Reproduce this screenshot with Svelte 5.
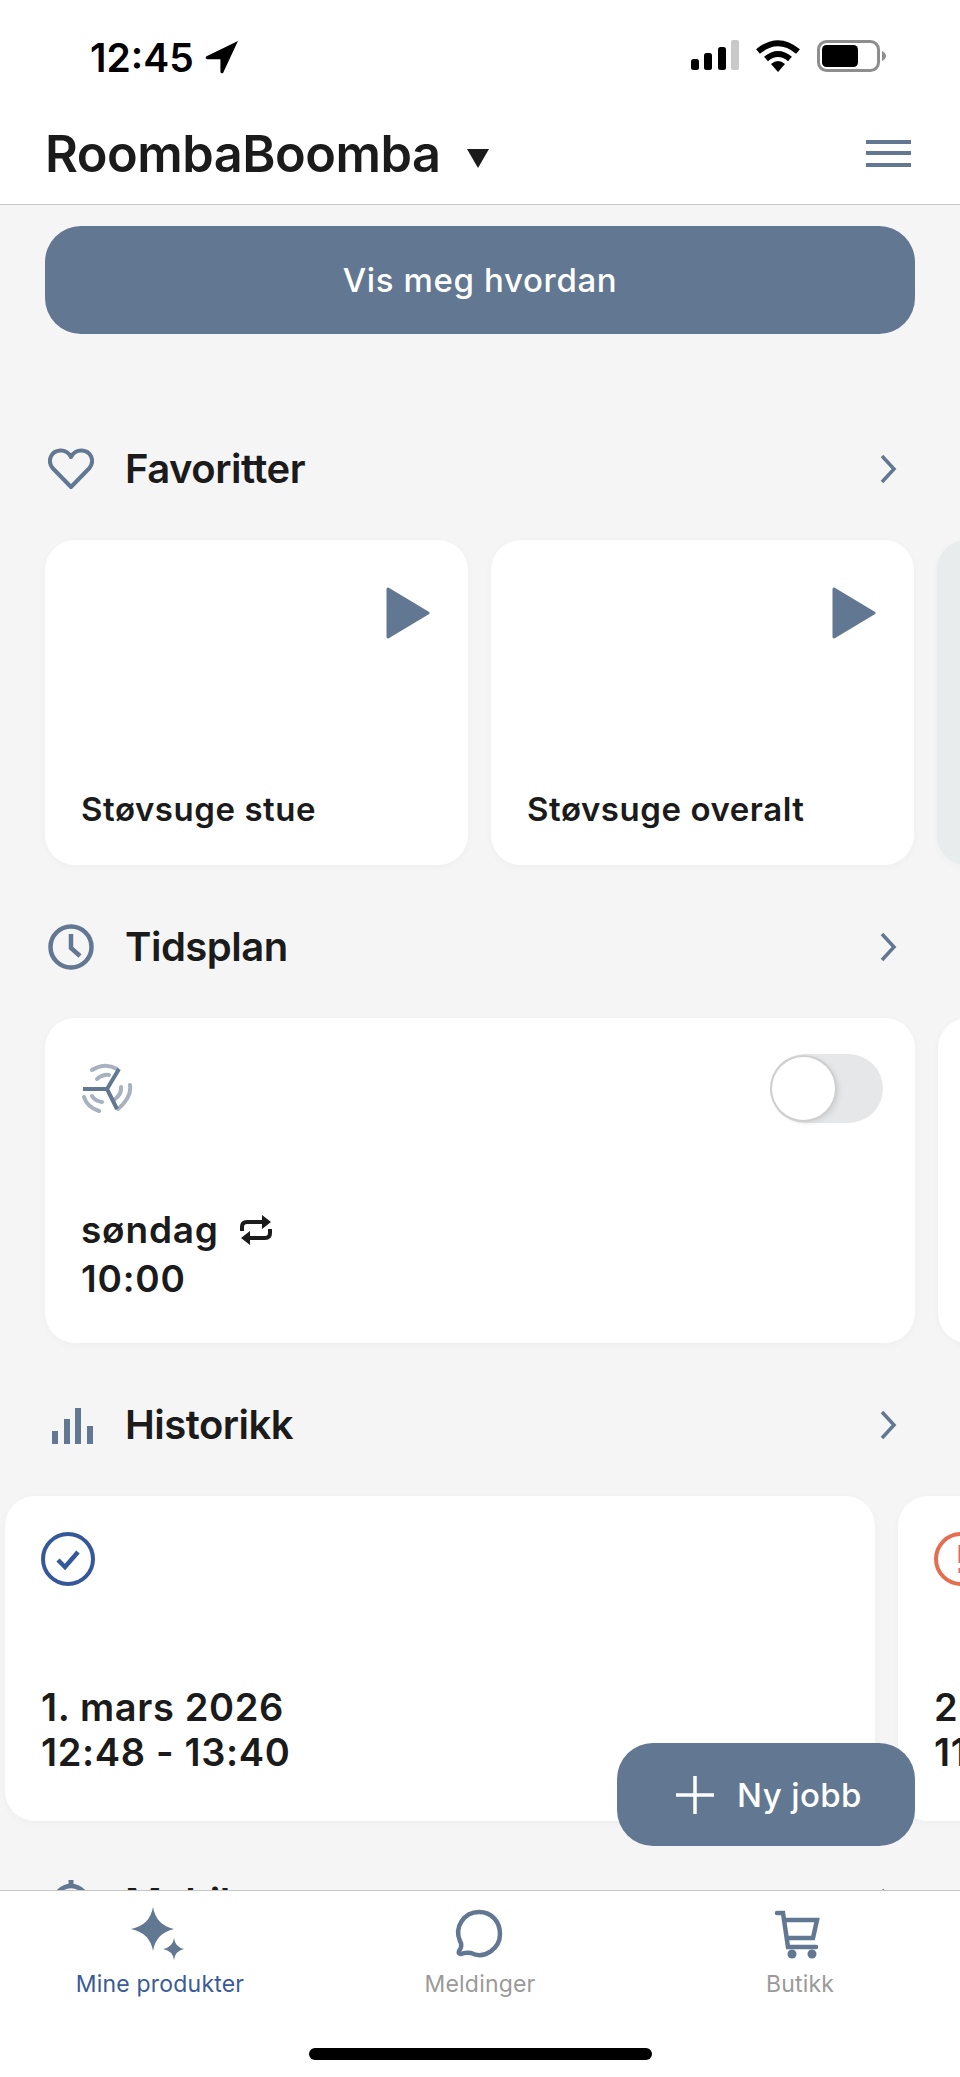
<script>
  const favorites = ["Støvsuge stue", "Støvsuge overalt"];
</script>

<div class="phone">
  <div class="statusbar">
    <div class="clock">
      <span>12:45</span>
      <svg width="34" height="34" viewBox="0 0 32 32"><path d="M31 1 L1 15.5 Q0 17.5 2 18 L14.5 18 L14.5 30 Q15 32 17 31 Z" fill="#000" /></svg>
    </div>
    <div class="status-icons">
      <svg width="48" height="30" viewBox="0 0 48 30">
        <rect x="0" y="19" width="8" height="11" rx="2.5" fill="#000" />
        <rect x="13" y="13" width="8" height="17" rx="2.5" fill="#000" />
        <rect x="27" y="7" width="8" height="23" rx="2.5" fill="#000" />
        <rect x="40" y="0" width="8" height="30" rx="2" fill="#c9c9c9" />
      </svg>
      <svg width="44" height="32" viewBox="0 0 44 32">
        <path d="M2 11.5 Q22 -5 42 11.5" fill="none" stroke="#000" stroke-width="6" stroke-linejoin="round" />
        <path d="M10 19 Q22 9 34 19" fill="none" stroke="#000" stroke-width="6" />
        <path d="M15 24 Q22 18 29 24 L22 32 Z" fill="#000" />
      </svg>
      <svg width="70" height="32" viewBox="0 0 70 32">
        <rect x="1.5" y="1.5" width="60" height="29" rx="8" fill="#fff" stroke="#8e8e8e" stroke-width="3" />
        <rect x="5" y="5" width="36" height="22" rx="4.5" fill="#000" />
        <path d="M65 11 Q69 13 69 16 Q69 19 65 21 Z" fill="#8e8e8e" />
      </svg>
    </div>
  </div>

  <header class="topbar">
    <div class="title-wrap">
      <h1>RoombaBoomba</h1>
      <span class="caret"></span>
    </div>
    <div class="burger"><i></i><i></i><i></i></div>
  </header>

  <main class="content">
    <button class="guide-btn">Vis meg hvordan</button>

    <section class="first">
      <div class="section-head">
        <svg width="46" height="42" viewBox="0 0 46 42">
          <path d="M23 39 L4.5 20 C-1 13 3 3 12 2.5 C17 2.3 21 5 23 9 C25 5 29 2.3 34 2.5 C43 3 47 13 41.5 20 Z" fill="none" stroke="#627792" stroke-width="4" stroke-linejoin="round" />
        </svg>
        <h2>Favoritter</h2>
        <svg width="20" height="30" viewBox="0 0 20 30"><path d="M3 2 L15 15 L3 28" fill="none" stroke="#627792" stroke-width="3.5" /></svg>
      </div>
      <div class="row">
        {#each favorites as name}
          <div class="card fav">
            <svg class="play" width="44" height="52" viewBox="0 0 44 52"><path d="M2 2 L42 26 L2 50 Z" fill="#627792" stroke="#627792" stroke-width="3" stroke-linejoin="round" /></svg>
            <div class="card-text">{name}</div>
          </div>
        {/each}
        <div class="card fav ghost"></div>
      </div>
    </section>

    <section>
      <div class="section-head">
        <svg width="46" height="46" viewBox="0 0 46 46">
          <circle cx="23" cy="23" r="20.5" fill="none" stroke="#627792" stroke-width="4.5" />
          <path d="M23 10 V24 L32 32" fill="none" stroke="#627792" stroke-width="4.5" />
        </svg>
        <h2>Tidsplan</h2>
        <svg width="20" height="30" viewBox="0 0 20 30"><path d="M3 2 L15 15 L3 28" fill="none" stroke="#627792" stroke-width="3.5" /></svg>
      </div>
      <div class="row">
        <div class="card wide">
          <div class="card-top">
            <svg width="52" height="50" viewBox="0 0 52 50">
              <g fill="none" stroke="#a7b1bf" stroke-width="4" stroke-linecap="round">
                <path d="M11 7 Q24 -1 36 6" />
                <path d="M16 16 Q22 11 28 12" />
                <path d="M3 34 Q6 44 18 48" />
                <path d="M11 33 Q14 38 21 39" />
                <path d="M49 22 Q51 34 37 46" />
                <path d="M40 24 Q41 31 33 37" />
              </g>
              <path d="M38 6 L26 26 L36 46 M26 26 L2 26" fill="none" stroke="#627792" stroke-width="4" />
            </svg>
            <div class="toggle"><span class="knob"></span></div>
          </div>
          <div class="card-text schedule">
            <div class="day">søndag
              <svg width="34" height="30" viewBox="0 0 34 30">
                <g fill="none" stroke="#1b1b1b" stroke-width="4">
                  <path d="M3 16 V12 Q3 7 8 7 H26" />
                  <path d="M31 14 V18 Q31 23 26 23 H8" />
                </g>
                <path d="M23 0 L32 7 L23 14 Z M11 16 L2 23 L11 30 Z" fill="#1b1b1b" />
              </svg>
            </div>
            <div>10:00</div>
          </div>
        </div>
        <div class="card wide"></div>
      </div>
    </section>

    <section>
      <div class="section-head">
        <svg class="bars" width="42" height="38" viewBox="0 0 42 38">
          <rect x="1" y="25" width="6" height="13" fill="#627792" />
          <rect x="13" y="13" width="6" height="25" fill="#627792" />
          <rect x="24" y="2" width="6" height="36" fill="#627792" />
          <rect x="36" y="20" width="6" height="18" fill="#627792" />
        </svg>
        <h2>Historikk</h2>
        <svg width="20" height="30" viewBox="0 0 20 30"><path d="M3 2 L15 15 L3 28" fill="none" stroke="#627792" stroke-width="3.5" /></svg>
      </div>
      <div class="row history">
        <div class="card wide">
          <svg class="status-dot" width="54" height="54" viewBox="0 0 54 54">
            <circle cx="27" cy="27" r="25" fill="none" stroke="#35589a" stroke-width="4" />
            <path d="M17 28 L24 35 L37 20" fill="none" stroke="#35589a" stroke-width="4.5" />
          </svg>
          <div class="card-text log">
            <div>1. mars 2026</div>
            <div>12:48 - 13:40</div>
          </div>
        </div>
        <div class="card wide">
          <svg class="status-dot" width="54" height="54" viewBox="0 0 54 54">
            <circle cx="27" cy="27" r="25" fill="none" stroke="#e56d50" stroke-width="4" />
            <path d="M27 13 V31 M27 36 V41" fill="none" stroke="#e56d50" stroke-width="5" />
          </svg>
          <div class="card-text log">
            <div>2. feb 2026</div>
            <div>11:02 - 11:40</div>
          </div>
        </div>
      </div>
    </section>

    <section>
      <div class="section-head">
        <svg width="46" height="46" viewBox="0 0 46 46">
          <circle cx="23" cy="23" r="17" fill="none" stroke="#627792" stroke-width="4.5" />
          <path d="M23 0 V8" stroke="#627792" stroke-width="5" />
        </svg>
        <h2>Mobil</h2>
        <svg width="20" height="30" viewBox="0 0 20 30"><path d="M3 2 L15 15 L3 28" fill="none" stroke="#627792" stroke-width="3.5" /></svg>
      </div>
    </section>

    <button class="fab">
      <svg width="38" height="38" viewBox="0 0 38 38"><path d="M19 0 V38 M0 19 H38" stroke="#fff" stroke-width="3.5" /></svg>
      Ny jobb
    </button>
  </main>

  <nav class="tabbar">
    <div class="tab active">
      <svg width="54" height="54" viewBox="3 0 54 54">
        <path d="M23 0 Q26 18 44 22 Q26 26 23 44 Q20 26 1 22 Q20 18 23 0 Z" fill="#627792" />
        <path d="M44 31 Q45 40 54 42 Q45 44 44 53 Q43 44 33 42 Q43 40 44 31 Z" fill="#627792" />
      </svg>
      <span>Mine produkter</span>
    </div>
    <div class="tab">
      <svg width="54" height="54" viewBox="1 0 54 54">
        <path d="M7 44 Q11 39 8 34 C2 20 12 5 27 5 C40 5 48 15 48 27 C48 41 33 53 19 46 Q13 45 9 47 Q6 47 7 44 Z" fill="none" stroke="#627792" stroke-width="4.5" stroke-linejoin="round" />
      </svg>
      <span>Meldinger</span>
    </div>
    <div class="tab">
      <svg width="54" height="54" viewBox="3 0 54 54">
        <path d="M7 6 H13 L18 40 H46" fill="none" stroke="#627792" stroke-width="4.5" stroke-linecap="round" />
        <path d="M15 13 H47 L43 31 H18" fill="none" stroke="#627792" stroke-width="4.5" />
        <circle cx="22" cy="47" r="4.5" fill="#627792" />
        <circle cx="42" cy="47" r="4.5" fill="#627792" />
      </svg>
      <span>Butikk</span>
    </div>
    <div class="home-bar"></div>
  </nav>
</div>

<style>
  :global(body) {
    margin: 0;
    background: #f5f5f5;
  }

  .phone {
    position: relative;
    width: 960px;
    height: 2077px;
    display: flex;
    flex-direction: column;
    overflow: hidden;
    font-family: Inter, "Liberation Sans", sans-serif;
    color: #1b1b1b;
    background: #f5f5f5;
  }

  .statusbar {
    height: 116px;
    flex: none;
    box-sizing: border-box;
    padding: 40px 73px 0 90px;
    display: flex;
    justify-content: space-between;
    align-items: flex-start;
    background: #fff;
  }

  .clock {
    display: flex;
    align-items: center;
    gap: 11px;
    height: 34px;
    font-size: 39px;
    font-weight: 600;
    color: #000;
  }

  .status-icons {
    display: flex;
    align-items: flex-start;
    gap: 17px;
  }

  .status-icons svg {
    display: block;
  }

  .topbar {
    height: 89px;
    flex: none;
    box-sizing: border-box;
    padding: 0 49px 14px 45px;
    display: flex;
    justify-content: space-between;
    align-items: center;
    background: #fff;
    border-bottom: 1px solid #c6c6c6;
  }

  .title-wrap {
    display: flex;
    align-items: center;
    gap: 26px;
  }

  h1 {
    margin: 2px 0 0;
    font-size: 50.5px;
    font-weight: 600;
    letter-spacing: -0.5px;
    line-height: 60px;
  }

  .caret {
    width: 0;
    height: 0;
    margin-top: 11px;
    border-left: 11px solid transparent;
    border-right: 11px solid transparent;
    border-top: 19px solid #1b1b1b;
  }

  .burger {
    display: flex;
    flex-direction: column;
    gap: 7.5px;
    width: 45px;
  }

  .burger i {
    display: block;
    height: 4px;
    background: #627792;
  }

  .content {
    position: relative;
    flex: 1;
    min-height: 0;
    overflow: hidden;
    padding-top: 21px;
  }

  .guide-btn {
    display: block;
    width: 870px;
    height: 108px;
    margin: 0 45px;
    border: none;
    border-radius: 36px;
    background: #627792;
    color: #fff;
    font-family: inherit;
    font-size: 33px;
    font-weight: 500;
    letter-spacing: 0.65px;
  }

  section {
    margin-top: 55px;
  }

  section.first {
    margin-top: 108px;
  }

  .section-head {
    display: grid;
    grid-template-columns: 77px 1fr auto;
    align-items: center;
    height: 52px;
    padding: 0 61px 0 48px;
    margin-bottom: 46px;
  }

  .section-head svg {
    display: block;
  }

  .bars {
    margin-left: 3px;
  }

  h2 {
    margin: 1px 0 0;
    font-size: 40px;
    font-weight: 600;
    letter-spacing: -0.5px;
    line-height: 52px;
  }

  .row {
    display: flex;
    gap: 23px;
    padding-left: 45px;
    height: 325px;
  }

  .row.history {
    padding-left: 5px;
  }

  .card {
    position: relative;
    flex: none;
    box-sizing: border-box;
    height: 325px;
    border-radius: 30px;
    background: #fff;
    box-shadow: 0 2px 8px rgba(0, 0, 0, 0.03);
  }

  .fav {
    width: 423px;
  }

  .ghost {
    background: #e8ecec;
  }

  .wide {
    width: 870px;
  }

  .play {
    position: absolute;
    top: 47px;
    right: 38px;
  }

  .card-text {
    position: absolute;
    left: 36px;
    font-size: 33px;
    font-weight: 600;
    letter-spacing: 0.55px;
  }

  .fav .card-text {
    top: 249px;
    line-height: 40px;
  }

  .card-top {
    display: flex;
    justify-content: space-between;
    padding: 36px 32px 0 36px;
  }

  .card-top svg {
    margin-top: 9px;
  }

  .toggle {
    position: relative;
    width: 113px;
    height: 69px;
    border-radius: 35px;
    background: #e6e7e9;
  }

  .knob {
    position: absolute;
    left: 2px;
    top: 3px;
    width: 63px;
    height: 63px;
    border-radius: 50%;
    background: #fff;
    box-shadow: 0 0 0 2px #cfcfcf, 3px 2px 6px rgba(0, 0, 0, 0.12);
  }

  .schedule {
    top: 187px;
    font-size: 37px;
    line-height: 49px;
    letter-spacing: 0.8px;
  }

  .day {
    display: flex;
    align-items: center;
    gap: 20px;
  }

  .status-dot {
    position: absolute;
    left: 36px;
    top: 36px;
  }

  .log {
    top: 189px;
    font-size: 38px;
    line-height: 45px;
    letter-spacing: 0.65px;
  }

  .fab {
    position: absolute;
    top: 1538px;
    right: 45px;
    width: 298px;
    height: 103px;
    padding: 0 0 0 6px;
    display: flex;
    align-items: center;
    justify-content: center;
    gap: 23px;
    border: none;
    border-radius: 36px;
    background: #627792;
    color: #fff;
    font-family: inherit;
    font-size: 33px;
    font-weight: 500;
    letter-spacing: 0.4px;
  }

  .tabbar {
    position: relative;
    height: 187px;
    flex: none;
    box-sizing: border-box;
    display: grid;
    grid-template-columns: repeat(3, 1fr);
    padding: 16px 0 0 0;
    background: #fff;
    border-top: 1px solid #c6c6c6;
  }

  .tab {
    display: flex;
    flex-direction: column;
    align-items: center;
    gap: 3px;
    font-size: 23px;
    letter-spacing: 0.2px;
    color: #9a9a9a;
  }

  .tab svg {
    display: block;
    overflow: visible;
  }

  .tab span {
    line-height: 28px;
    margin-top: 6px;
  }

  .tab.active {
    color: #3a5a98;
  }

  .home-bar {
    position: absolute;
    left: 309px;
    bottom: 17px;
    width: 343px;
    height: 12px;
    border-radius: 6px;
    background: #000;
  }
</style>
